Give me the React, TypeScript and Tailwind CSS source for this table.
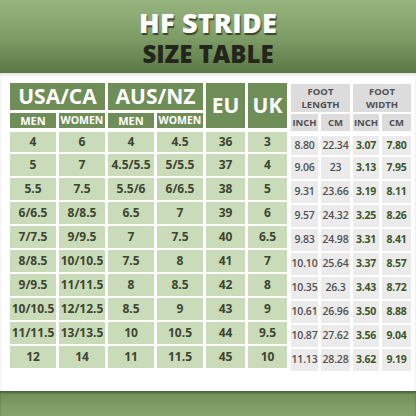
const usa = [
  ["4", "6", "4", "4.5", "36", "3"],
  ["5", "7", "4.5/5.5", "5/5.5", "37", "4"],
  ["5.5", "7.5", "5.5/6", "6/6.5", "38", "5"],
  ["6/6.5", "8/8.5", "6.5", "7", "39", "6"],
  ["7/7.5", "9/9.5", "7", "7.5", "40", "6.5"],
  ["8/8.5", "10/10.5", "7.5", "8", "41", "7"],
  ["9/9.5", "11/11.5", "8", "8.5", "42", "8"],
  ["10/10.5", "12/12.5", "8.5", "9", "43", "9"],
  ["11/11.5", "13/13.5", "10", "10.5", "44", "9.5"],
  ["12", "14", "11", "11.5", "45", "10"],
];

const foot = [
  ["8.80", "22.34", "3.07", "7.80"],
  ["9.06", "23", "3.13", "7.95"],
  ["9.31", "23.66", "3.19", "8.11"],
  ["9.57", "24.32", "3.25", "8.26"],
  ["9.83", "24.98", "3.31", "8.41"],
  ["10.10", "25.64", "3.37", "8.57"],
  ["10.35", "26.3", "3.43", "8.72"],
  ["10.61", "26.96", "3.50", "8.88"],
  ["10.87", "27.62", "3.56", "9.04"],
  ["11.13", "28.28", "3.62", "9.19"],
];

function GreenHead({ children, className = "" }: { children: React.ReactNode; className?: string }) {
  return (
    <div className={`flex items-center justify-center bg-[#6f8d57] text-white font-bold ${className}`}>
      {children}
    </div>
  );
}

function GrayHead({ children, className = "" }: { children: React.ReactNode; className?: string }) {
  return (
    <div className={`flex items-center justify-center bg-[#dcdcdc] text-[#505050] font-bold text-center ${className}`}>
      {children}
    </div>
  );
}

export default function App() {
  return (
    <div className="flex h-[416px] w-[416px] flex-col overflow-hidden bg-white font-['Open_Sans',sans-serif]">
      <div className="flex h-[73px] shrink-0 flex-col items-center justify-center gap-[6px] bg-gradient-to-b from-[#97b47f] via-[#7f9d66] to-[#5b7946] pt-[2px]">
        <div className="text-[27px] font-extrabold leading-[26px] tracking-[0.2px] text-white [text-shadow:1px_2px_1px_rgba(30,40,20,0.75)]">
          HF STRIDE
        </div>
        <div className="text-[24px] font-extrabold leading-[23px] text-[#24261c]">SIZE TABLE</div>
      </div>

      <div className="flex flex-1 gap-[4px] pl-[10px] pt-[10px] shadow-[inset_0_2px_3px_rgba(0,0,0,0.12)]">
        <div className="grid grid-cols-[46px_46px_46px_46px_39px_39px] grid-rows-[27px_16px] gap-x-[3px] gap-y-[2px] content-start auto-rows-[22px]">
          <GreenHead className="col-span-2 text-[21px] leading-none">USA/CA</GreenHead>
          <GreenHead className="col-span-2 text-[21px] leading-none">AUS/NZ</GreenHead>
          <GreenHead className="row-span-2 text-[21px] leading-none">EU</GreenHead>
          <GreenHead className="row-span-2 text-[21px] leading-none">UK</GreenHead>
          <GreenHead className="mt-[1px] text-[11px] leading-none">MEN</GreenHead>
          <GreenHead className="mt-[1px] text-[10.5px] leading-none">WOMEN</GreenHead>
          <GreenHead className="mt-[1px] text-[11px] leading-none">MEN</GreenHead>
          <GreenHead className="mt-[1px] text-[10.5px] leading-none">WOMEN</GreenHead>
          {usa.map((row, i) =>
            row.map((v, j) => (
              <div
                key={`${i}-${j}`}
                className={`flex items-center justify-center bg-[#cadbb9] text-[12px] font-bold text-[#3d4631] ${i === 0 ? "mt-[2px]" : ""}`}
              >
                {v}
              </div>
            ))
          )}
        </div>

        <div className="mt-[1px] grid grid-cols-[27px_29px_26px_29px] grid-rows-[28px_17px] gap-x-[3px] gap-y-[2px] content-start auto-rows-[22px]">
          <GrayHead className="col-span-2 flex-col text-[9.5px] leading-[13px]">
            <span>FOOT</span>
            <span>LENGTH</span>
          </GrayHead>
          <GrayHead className="col-span-2 flex-col text-[9.5px] leading-[13px]">
            <span>FOOT</span>
            <span>WIDTH</span>
          </GrayHead>
          <GrayHead className="text-[9.5px] leading-none">INCH</GrayHead>
          <GrayHead className="text-[9.5px] leading-none">CM</GrayHead>
          <GrayHead className="text-[9.5px] leading-none">INCH</GrayHead>
          <GrayHead className="text-[9.5px] leading-none">CM</GrayHead>
          {foot.map((row, i) =>
            row.map((v, j) => (
              <div
                key={`f${i}-${j}`}
                className={`flex items-center justify-center bg-[#ebebeb] text-[10.5px] tracking-[-0.2px] ${
                  j >= 2 ? "font-bold text-[#3f5528]" : "font-semibold text-[#505050]"
                } ${i === 0 ? "mt-[3px]" : ""}`}
              >
                {v}
              </div>
            ))
          )}
        </div>
      </div>

      <div className="h-[25px] shrink-0 bg-gradient-to-b from-[#6f8f57] via-[#7c9b63] to-[#86a46c] shadow-[inset_0_2px_2px_rgba(40,60,30,0.5)]" />
    </div>
  );
}
